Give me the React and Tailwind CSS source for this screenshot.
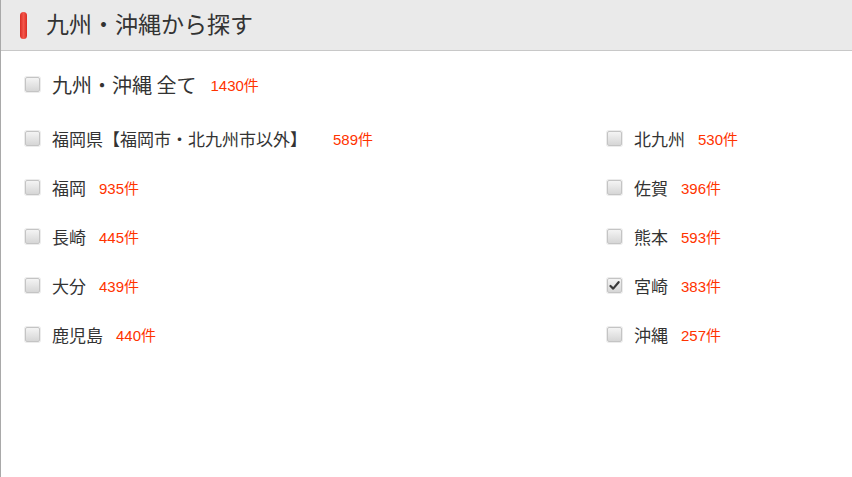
import { useState } from "react";

const jp = { fontFamily: '"Noto Sans CJK JP", "Noto Sans", sans-serif' };
const num = { fontFamily: '"Liberation Sans", Arial, sans-serif' };

const LEFT = [
  { name: "福岡県【福岡市・北九州市以外】", count: 589, wide: true },
  { name: "福岡", count: 935 },
  { name: "長崎", count: 445 },
  { name: "大分", count: 439 },
  { name: "鹿児島", count: 440 },
];

const RIGHT = [
  { name: "北九州", count: 530 },
  { name: "佐賀", count: 396 },
  { name: "熊本", count: 593 },
  { name: "宮崎", count: 383 },
  { name: "沖縄", count: 257 },
];

function Box({ checked, onClick }) {
  return (
    <button
      type="button"
      onClick={onClick}
      className="w-[15px] h-[15px] shrink-0 flex items-center justify-center rounded-[2px] border border-[#c4c4c4] bg-gradient-to-b from-[#f4f4f4] to-[#d6d6d6] shadow-[0_0_0_1px_#ececec]"
    >
      {checked && (
        <svg width="11" height="11" viewBox="0 0 11 11">
          <path d="M1.5 6 L4.2 8.6 L9.6 2.2" fill="none" stroke="#3a3a3a" strokeWidth="2.2" strokeLinecap="round" strokeLinejoin="round" />
        </svg>
      )}
    </button>
  );
}

function Row({ item, checked, toggle }) {
  return (
    <div className="h-[49px] flex items-center">
      <Box checked={checked} onClick={toggle} />
      <span className="ml-[12px] text-[17px] text-[#333] leading-none" style={jp}>
        {item.name}
      </span>
      <span className={(item.wide ? "ml-[26px]" : "ml-[13px]") + " text-[15px] text-[#ff3300] leading-none"} style={num}>
        {item.count}
        <span style={jp}>件</span>
      </span>
    </div>
  );
}

export default function App() {
  const [checked, setChecked] = useState({ 宮崎: true });
  const toggle = (k) => () => setChecked((c) => ({ ...c, [k]: !c[k] }));

  return (
    <div className="w-[852px] h-[477px] bg-white border-l border-[#a9a9a9] overflow-hidden">
      <div className="h-[51px] bg-[#eaeaea] border-b border-[#c8c8c8] flex items-center pl-[19px]">
        <div className="w-[7px] h-[27px] rounded-full bg-gradient-to-r from-[#d92a22] via-[#f4554a] to-[#d92a22]" />
        <h1 className="ml-[19px] pb-[4px] text-[23px] text-[#333] leading-none" style={jp}>
          九州・沖縄から探す
        </h1>
      </div>

      <div className="pl-[24px]">
        <div className="mt-[9px] mb-[5px] h-[49px] flex items-center">
          <Box checked={!!checked.all} onClick={toggle("all")} />
          <span className="ml-[12px] text-[20px] text-[#333] leading-none" style={jp}>
            九州・沖縄 全て
          </span>
          <span className="ml-[14px] text-[15px] text-[#ff3300] leading-none" style={num}>
            1430<span style={jp}>件</span>
          </span>
        </div>

        <div className="grid grid-cols-[582px_1fr]">
          <div className="flex flex-col">
            {LEFT.map((it) => (
              <Row key={it.name} item={it} checked={!!checked[it.name]} toggle={toggle(it.name)} />
            ))}
          </div>
          <div className="flex flex-col">
            {RIGHT.map((it) => (
              <Row key={it.name} item={it} checked={!!checked[it.name]} toggle={toggle(it.name)} />
            ))}
          </div>
        </div>
      </div>
    </div>
  );
}
